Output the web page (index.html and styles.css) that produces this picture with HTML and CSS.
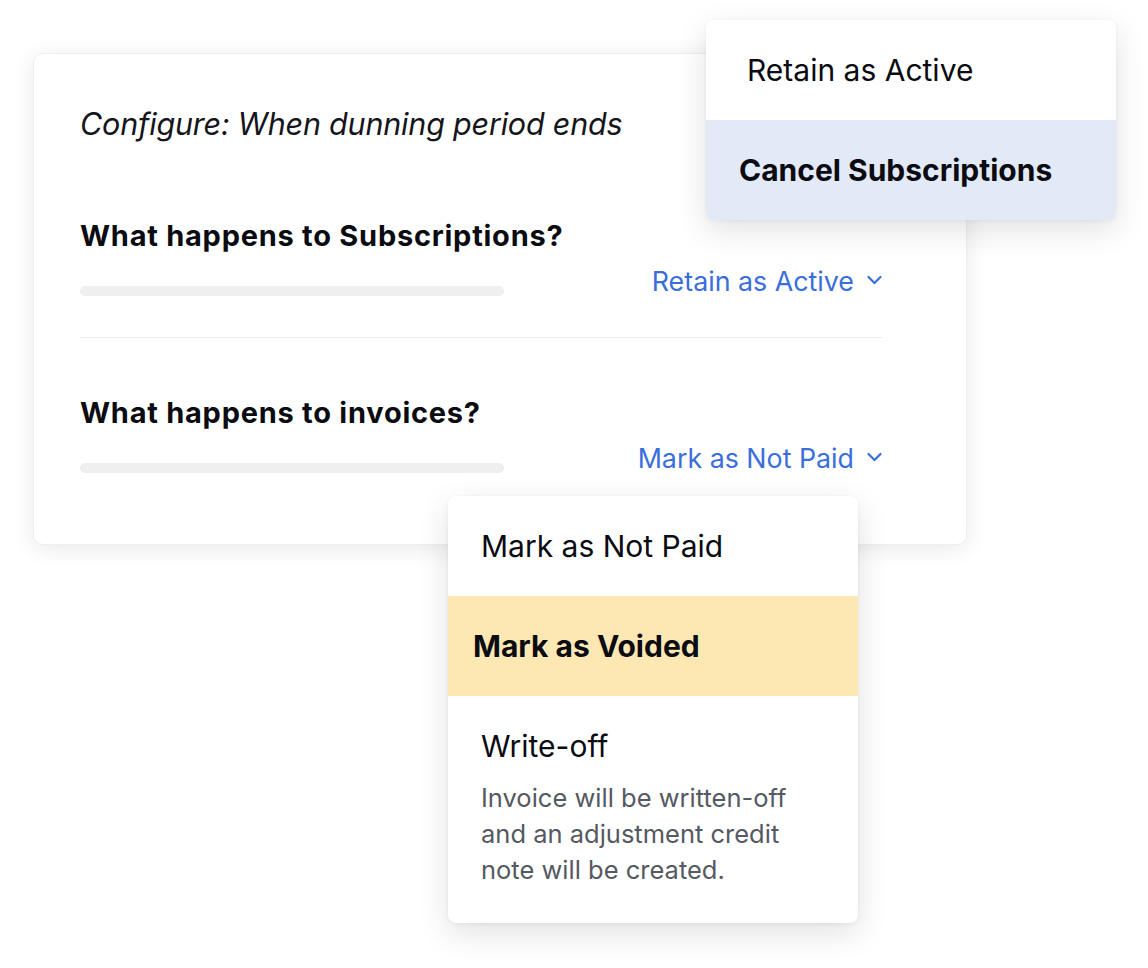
FILE: index.html
```html
<!DOCTYPE html>
<html lang="en">
<head>
<meta charset="utf-8">
<title>Dunning configuration</title>
<link rel="stylesheet" href="styles.css">
</head>
<body>
<div class="stage">
  <section class="card">
    <p class="configure">Configure: When dunning period ends</p>
    <div class="question">
      <h2 class="q-title">What happens to Subscriptions?</h2>
      <div class="q-row">
        <span class="bar"></span>
        <span class="select">Retain as Active
          <svg class="chev" width="15" height="10" viewBox="0 0 15 10"><path d="M1.5 2l6 6 6-6" fill="none" stroke="currentColor" stroke-width="2.2" stroke-linecap="round" stroke-linejoin="round"/></svg>
        </span>
      </div>
    </div>
    <hr class="divider">
    <div class="question">
      <h2 class="q-title">What happens to invoices?</h2>
      <div class="q-row">
        <span class="bar"></span>
        <span class="select">Mark as Not Paid
          <svg class="chev" width="15" height="10" viewBox="0 0 15 10"><path d="M1.5 2l6 6 6-6" fill="none" stroke="currentColor" stroke-width="2.2" stroke-linecap="round" stroke-linejoin="round"/></svg>
        </span>
      </div>
    </div>
  </section>

  <ul class="menu menu-subs">
    <li class="opt">Retain as Active</li>
    <li class="opt opt-active opt-blue">Cancel Subscriptions</li>
  </ul>

  <ul class="menu menu-inv">
    <li class="opt">Mark as Not Paid</li>
    <li class="opt opt-active opt-yellow">Mark as Voided</li>
    <li class="opt opt-desc">
      <span class="opt-title">Write-off</span>
      <span class="opt-note">Invoice will be written-off and an adjustment credit note will be created.</span>
    </li>
  </ul>
</div>
</body>
</html>
```

FILE: styles.css
```css
* { box-sizing: border-box; }
html, body { margin: 0; padding: 0; background: #ffffff; }
body {
  font-family: Inter, "Noto Sans", "Liberation Sans", sans-serif;
  color: #0b0b12;
}
.stage {
  position: relative;
  width: 1148px;
  height: 968px;
  overflow: hidden;
  padding: 53px 0 0 33px;
}
.card {
  width: 934px;
  height: 492px;
  background: #fff;
  border: 1px solid #efefef;
  border-radius: 10px;
  box-shadow: 0 4px 22px rgba(0,0,0,0.09);
  padding: 50px 84px 0 46px;
}
.configure {
  margin: 0;
  font-style: italic;
  font-weight: 400;
  font-size: 30.5px;
  line-height: 40px;
  letter-spacing: -0.2px;
  color: #15151c;
}
.question { margin-top: 74px; }
.divider + .question { margin-top: 57px; }
.q-title {
  margin: 0;
  font-size: 29px;
  font-weight: 700;
  line-height: 36px;
  letter-spacing: 0.75px;
}
.q-row {
  margin-top: 11px;
  display: flex;
  justify-content: space-between;
  align-items: flex-end;
}
.bar {
  width: 424px;
  height: 10px;
  border-radius: 5px;
  background: #efefef;
  margin-bottom: 1px;
}
.select {
  display: flex;
  align-items: center;
  gap: 13px;
  font-size: 26.8px;
  line-height: 32px;
  color: #3a6edb;
}
.chev { margin-top: -2px; }
.divider {
  border: 0;
  border-top: 1px solid #ebebeb;
  margin: 40px 0 0;
}
.menu {
  position: absolute;
  left: 0; top: 0;
  margin: 0;
  padding: 0;
  list-style: none;
  width: 410px;
  background: #fff;
  border-radius: 8px;
  overflow: hidden;
  box-shadow: 0 10px 32px rgba(0,0,0,0.12), 0 1px 4px rgba(0,0,0,0.05);
}
.menu-subs { left: 706px; top: 20px; }
.menu-inv { left: 448px; top: 496px; }
.opt {
  height: 100px;
  display: flex;
  align-items: center;
  padding-left: 41px;
  font-size: 30px;
  font-weight: 400;
  color: #0b0b12;
}
.menu-inv .opt { padding-left: 33px; }
.opt-active { font-weight: 700; padding-left: 33px; }
.menu-inv .opt-active { padding-left: 25px; }
.opt-blue { background: #e2e9f7; }
.opt-yellow { background: #fde8b3; }
.opt-desc {
  height: 227px;
  flex-direction: column;
  align-items: flex-start;
  justify-content: flex-start;
  padding-top: 32px;
}
.opt-title { line-height: 36px; }
.opt-note {
  margin-top: 16px;
  font-size: 25.5px;
  line-height: 36px;
  color: #555962;
  width: 330px;
}
```
